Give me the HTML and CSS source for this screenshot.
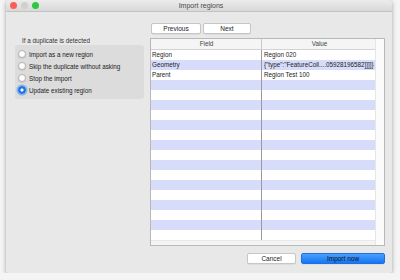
FILE: index.html
```html
<!DOCTYPE html>
<html lang="en">
<head>
    <meta charset="UTF-8">
    <title>Import regions</title>
    <link rel="stylesheet" href="styles.css">
</head>
<body>
    <div class="window">
        <div class="titlebar">
            <div class="lights">
                <span class="light red"></span>
                <span class="light grey"></span>
                <span class="light green"></span>
            </div>
            <div class="title">Import regions</div>
        </div>
        <div class="content">
            <div class="left">
                <div class="group-label">If a duplicate is detected</div>
                <div class="group">
                    <div class="option"><span class="radio"></span>Import as a new region</div>
                    <div class="option"><span class="radio"></span>Skip the duplicate without asking</div>
                    <div class="option"><span class="radio"></span>Stop the import</div>
                    <div class="option"><span class="radio checked"></span>Update existing region</div>
                </div>
            </div>
            <div class="right">
                <div class="nav">
                    <button class="btn prev">Previous</button>
                    <button class="btn next">Next</button>
                </div>
                <div class="table">
                    <div class="table-body">
                        <div class="row head">
                            <div class="cell field">Field</div>
                            <div class="cell value">Value</div>
                        </div>
                        <div class="row"><div class="cell field">Region</div><div class="cell value">Region 020</div></div>
                        <div class="row band"><div class="cell field">Geometry</div><div class="cell value">{"type":"FeatureColl....05928196582]]]]}</div></div>
                        <div class="row"><div class="cell field">Parent</div><div class="cell value">Region Test 100</div></div>
                        <div class="row band"><div class="cell field"></div><div class="cell value"></div></div>
                        <div class="row"><div class="cell field"></div><div class="cell value"></div></div>
                        <div class="row band"><div class="cell field"></div><div class="cell value"></div></div>
                        <div class="row"><div class="cell field"></div><div class="cell value"></div></div>
                        <div class="row band"><div class="cell field"></div><div class="cell value"></div></div>
                        <div class="row"><div class="cell field"></div><div class="cell value"></div></div>
                        <div class="row band"><div class="cell field"></div><div class="cell value"></div></div>
                        <div class="row"><div class="cell field"></div><div class="cell value"></div></div>
                        <div class="row band"><div class="cell field"></div><div class="cell value"></div></div>
                        <div class="row"><div class="cell field"></div><div class="cell value"></div></div>
                        <div class="row band"><div class="cell field"></div><div class="cell value"></div></div>
                        <div class="row"><div class="cell field"></div><div class="cell value"></div></div>
                        <div class="row band"><div class="cell field"></div><div class="cell value"></div></div>
                        <div class="row"><div class="cell field"></div><div class="cell value"></div></div>
                        <div class="row band"><div class="cell field"></div><div class="cell value"></div></div>
                        <div class="row"><div class="cell field"></div><div class="cell value"></div></div>
                        <div class="hscroll"></div>
                    </div>
                    <div class="vscroll"></div>
                </div>
                <div class="footer">
                    <button class="btn cancel">Cancel</button>
                    <button class="btn primary">Import now</button>
                </div>
            </div>
        </div>
    </div>
</body>
</html>
```

FILE: styles.css
```css
body {
    margin: 0;
    background: #f4f4f4;
    font-family: "Liberation Sans", Arial, sans-serif;
    font-size: 6.3px;
    color: #222;
}
.window {
    margin-left: 6px;
    width: 386px;
    height: 273px;
    background: #e8e8e8;
    border-radius: 4px 4px 2px 2px;
    box-shadow: 0 1px 4px rgba(0, 0, 0, 0.35);
    overflow: hidden;
}
.titlebar {
    height: 11px;
    display: flex;
    align-items: center;
    background: linear-gradient(#ececec, #d8d8d8);
    border-bottom: 1px solid #c2c2c2;
}
.lights {
    display: flex;
    gap: 4px;
    padding-left: 4px;
    width: 60px;
}
.light {
    width: 7px;
    height: 7px;
    border-radius: 50%;
}
.red { background: #fc5f57; }
.grey { background: #d0d0d0; }
.green { background: #2ac940; }
.title {
    flex: 1;
    text-align: center;
    padding-right: 60px;
    font-size: 7px;
    color: #4a4a4a;
}
.content {
    display: flex;
    padding: 0 7px 0 9px;
}
.left {
    width: 129px;
    padding-top: 24px;
}
.group-label {
    padding-left: 7px;
    height: 9px;
    line-height: 9px;
    color: #333;
}
.group {
    background: #dcdcdc;
    border-radius: 3px;
    padding: 3px 0 3px 3px;
    height: 48px;
}
.option {
    display: flex;
    align-items: center;
    height: 12px;
    gap: 3px;
}
.radio {
    width: 8px;
    height: 8px;
    border-radius: 50%;
    background: #fff;
    border: 1px solid #b4b4b4;
    box-sizing: border-box;
    box-shadow: 0 0.5px 1px rgba(0, 0, 0, 0.15);
}
.radio.checked {
    background: radial-gradient(circle, #fff 0 1.3px, #1a7df5 1.8px);
    border-color: #1565d8;
    box-shadow: 0 0 0 1.5px rgba(60, 140, 250, 0.55);
}
.right {
    margin-left: 6px;
    width: 235px;
    display: flex;
    flex-direction: column;
}
.nav {
    display: flex;
    gap: 2px;
    padding: 11px 0 0 1px;
    height: 11px;
}
.btn {
    font-family: "Liberation Sans", Arial, sans-serif;
    font-size: 6.5px;
    color: #222;
    background: #fff;
    border: 1px solid #c6c6c6;
    border-radius: 2px;
    padding: 0;
    height: 11px;
    line-height: 9px;
    box-shadow: 0 0.5px 0.5px rgba(0, 0, 0, 0.1);
}
.prev { width: 50px; }
.next { width: 48px; }
.table {
    margin-top: 4px;
    height: 208px;
    border: 1px solid #b8b8b8;
    box-sizing: border-box;
    display: flex;
    background: #fff;
}
.table-body {
    flex: 1;
    min-width: 0;
    display: flex;
    flex-direction: column;
}
.row {
    display: flex;
    height: 10px;
    line-height: 10px;
    background: #fff;
}
.row.band {
    background: #d7dcfa;
}
.row.head {
    background: #f5f5f5;
    border-bottom: 1px solid #d2d2d2;
    color: #444;
    text-align: center;
}
.cell {
    white-space: nowrap;
    overflow: hidden;
    padding-left: 1px;
}
.field {
    width: 109px;
    border-right: 1px solid #9a9a9a;
}
.value {
    flex: 1;
    min-width: 0;
    padding-left: 2px;
}
.head .field {
    border-right: 1px solid #c8c8c8;
}
.hscroll {
    flex: 1;
    background: #f4f4f4;
    border-top: 1px solid #e8e8e8;
}
.vscroll {
    width: 8px;
    background: #fbfbfb;
    border-left: 1px solid #e6e6e6;
}
.footer {
    display: flex;
    justify-content: flex-end;
    gap: 5px;
    padding-top: 7px;
}
.cancel { width: 49px; }
.primary {
    width: 84px;
    color: #111;
    border-color: #1b6fe8;
    background: linear-gradient(#4aa0fb, #1576f4);
}
```
